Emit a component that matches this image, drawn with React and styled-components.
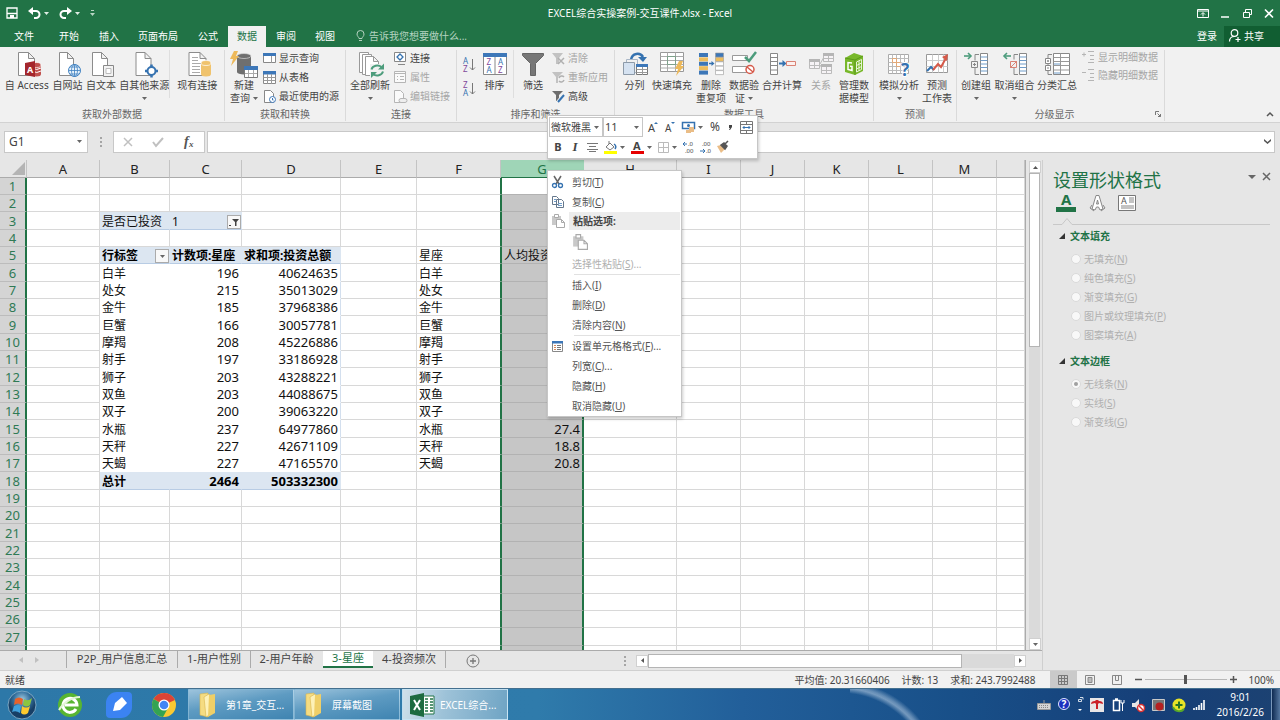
import React from "react";
import styled, { createGlobalStyle, css } from "styled-components";

const green = "#217346";
const latin = '"Noto Sans", "Noto Sans CJK SC", sans-serif';

const Global = createGlobalStyle`
  *, *::before, *::after { box-sizing: border-box; }
  body { margin: 0; font-family: ${latin}; font-size: 10px; line-height: 14px; color: #444; }
  button, input, select { font: inherit; color: inherit; margin: 0; padding: 0; border: 0; background: none; border-radius: 0; }
  select { appearance: none; }
  svg { display: block; flex: none; overflow: visible; }
`;

const Window = styled.div`
  display: flex;
  flex-direction: column;
  height: 100vh;
  overflow: hidden;
  position: relative;
  background: #e6e6e6;
`;

/* ---------- title bar and tabs ---------- */

const TitleBar = styled.header`
  display: grid;
  grid-template-columns: 1fr auto 1fr;
  align-items: center;
  height: 26px;
  flex: none;
  background: ${green};
  color: #fff;
`;
const QuickAccess = styled.div`
  display: flex;
  align-items: center;
  height: 18px;
  padding-left: 6px;
  gap: 10px;
`;
const TitleText = styled.h1`
  margin: 0;
  font-size: 10px;
  font-weight: 400;
`;
const WindowButtons = styled.div`
  display: flex;
  justify-content: flex-end;
  gap: 10px;
  padding-right: 5px;
  height: 18px;
  align-items: center;
`;
const BareButton = styled.button`
  display: flex;
  align-items: center;
  justify-content: center;
  gap: 3px;
`;
const TabRow = styled.nav`
  display: flex;
  height: 21px;
  flex: none;
  background: ${green};
  color: #fff;
`;
const RibbonTab = styled.button`
  width: ${(p) => p.$w}px;
  height: 21px;
  padding-bottom: 2px;
  background: ${(p) => (p.$active ? "#f1f1f1" : "transparent")};
  color: ${(p) => (p.$active ? green : "#fff")};
`;
const TellMe = styled.button`
  display: flex;
  align-items: center;
  gap: 4px;
  margin-left: 12px;
  padding-bottom: 2px;
  color: #b5d3c1;
`;
const TabSpacer = styled.div`
  flex: 1;
`;
const ShareButton = styled.button`
  display: flex;
  align-items: center;
  gap: 4px;
  width: 56px;
  padding: 0 0 2px 5px;
  margin-left: 7px;
  background: #115e32;
`;

/* ---------- ribbon ---------- */

const Ribbon = styled.div`
  display: flex;
  height: 76px;
  flex: none;
  padding: 3px 0 2px;
  background: #f1f1f1;
  border-bottom: 1px solid #d2d2d2;
  position: relative;
`;
const Group = styled.section`
  display: flex;
  flex-direction: column;
  width: ${(p) => p.$w}px;
  border-right: 1px solid #dadada;
  height: 71px;
`;
const GroupBody = styled.div`
  display: flex;
  flex: 1;
  padding-left: ${(p) => p.$pad || 0}px;
`;
const GroupLabel = styled.div`
  display: flex;
  justify-content: center;
  position: relative;
  height: 14px;
  line-height: 14px;
  padding-right: ${(p) => (p.$launcher ? 12 : 0)}px;
  color: #666;
`;
const Launcher = styled.button`
  position: absolute;
  right: 3px;
  top: 4px;
`;
const BigButton = styled.button`
  display: flex;
  flex-direction: column;
  align-items: center;
  width: ${(p) => p.$w}px;
  height: 56px;
  padding-top: 1px;
  white-space: nowrap;
  line-height: 13px;
  color: ${(p) => (p.$off ? "#a6a6a6" : "#444")};
`;
const BigLabel = styled.span`
  display: flex;
  align-items: center;
  justify-content: center;
  gap: 3px;
  height: 13px;
`;
const IconSlot = styled.span`
  display: block;
  height: 28px;
`;
const SmallList = styled.div`
  display: flex;
  flex-direction: column;
  gap: ${(p) => p.$gap || 5}px;
  padding: ${(p) => p.$top || 0}px 0 0 ${(p) => p.$pad || 0}px;
`;
const SmallButton = styled.button`
  display: flex;
  align-items: center;
  gap: 3px;
  height: 14px;
  white-space: nowrap;
  color: ${(p) => (p.$off ? "#a6a6a6" : "#444")};
`;
const Rule = styled.div`
  width: 1px;
  height: 48px;
  background: #dedede;
`;
const CollapseButton = styled.button`
  margin: auto 6px 3px auto;
`;

/* ---------- formula bar ---------- */

const FormulaBar = styled.div`
  display: flex;
  align-items: center;
  height: 37px;
  flex: none;
  padding: 0 5px 0 4px;
`;
const NameBox = styled.div`
  display: flex;
  align-items: center;
  width: 84px;
  height: 22px;
  padding-right: 5px;
  background: #fff;
  border: 1px solid #c8c8c8;
  input { flex: 1; min-width: 0; padding-left: 4px; font-size: 12px; line-height: 18px; }
`;
const Dots = styled.div`
  width: 25px;
  display: flex;
  justify-content: center;
`;
const FxBox = styled.div`
  display: flex;
  align-items: center;
  justify-content: space-around;
  width: 92px;
  height: 22px;
  background: #fff;
  border: 1px solid #c8c8c8;
`;
const FormulaInput = styled.div`
  display: flex;
  align-items: center;
  flex: 1;
  height: 22px;
  margin-left: 2px;
  padding-right: 3px;
  background: #fff;
  border: 1px solid #c8c8c8;
  input { flex: 1; padding: 0 4px; font-size: 12px; }
`;

/* ---------- work area ---------- */

const WorkArea = styled.div`
  display: flex;
  flex: 1;
  min-height: 0;
`;
const SheetArea = styled.main`
  display: flex;
  flex-direction: column;
  flex: 1;
  min-width: 0;
`;
const GridRow = styled.div`
  display: flex;
  flex: 1;
  min-height: 0;
  border-bottom: 1px solid #ababab;
`;
const GridClip = styled.div`
  flex: 1;
  min-width: 0;
  overflow: hidden;
  background: #fff;
`;
const Grid = styled.table`
  width: 100%;
  table-layout: fixed;
  border-collapse: separate;
  border-spacing: 0;
  font-size: 12px;
  line-height: 16px;
  color: #111;
  tbody tr { height: 17px; }
  tbody tr:nth-child(3n) { height: 18px; }
  thead tr { height: 18px; }
`;
const ColHead = styled.th`
  padding: 0;
  height: 18px;
  font-size: 13px;
  font-weight: 400;
  background: ${(p) => (p.$sel ? "#9fd5b7" : "#e6e6e6")};
  color: ${(p) => (p.$sel ? green : "#222")};
  border-right: 1px solid ${(p) => (p.$sel ? "#9fd5b7" : "#c3c3c3")};
  border-bottom: 1px solid ${(p) => (p.$sel ? green : "#ababab")};
`;
const Corner = styled.th`
  padding: 0 1px 1px 0;
  background: #e6e6e6;
  border-right: 1px solid #c3c3c3;
  border-bottom: 1px solid #ababab;
  svg { margin-left: auto; }
`;
const RowHead = styled.th`
  padding: 0;
  font-size: 13px;
  font-weight: 400;
  background: #d4d4d4;
  color: #2f7a54;
  border-right: 2px solid ${green};
  border-bottom: 1px solid #bcbcbc;
`;
const Cell = styled.td`
  padding: 2px 2px 0;
  line-height: 14px;
  white-space: nowrap;
  overflow: hidden;
  border-right: 1px solid #d8d8d8;
  border-bottom: 1px solid #d8d8d8;
  ${(p) => p.$num && css`text-align: right; font-size: 13px; padding-top: 0; line-height: 16px;`}
  ${(p) => p.$pivot && css`border-color: #fff;`}
  ${(p) => p.$edge && css`border-right-color: #d3dfee;`}
  ${(p) => p.$head && css`font-weight: 700; color: #000;`}
  ${(p) => p.$blue && css`background: #dce6f1; border-right-color: #dce6f1; border-bottom-color: #b8cce4;`}
  ${(p) => p.$beforeSel && css`border-right-color: ${green};`}
  ${(p) => p.$sel && css`
    background: ${p.$first ? "#fff" : "#c6c6c6"};
    border-left: 1px solid ${green};
    border-right: 2px solid ${green};
    border-bottom-color: #b2b2b2;
  `}
`;
const WithButton = styled.div`
  display: flex;
  align-items: center;
  justify-content: space-between;
  height: 14px;
`;
const FilterButton = styled.button`
  display: flex;
  align-items: center;
  justify-content: center;
  width: 14px;
  height: 14px;
  margin-right: -2px;
  background: #f8f8f8;
  border: 1px solid #ababab;
`;
const VScroll = styled.div`
  display: flex;
  flex-direction: column;
  width: 17px;
  padding: 1px 2px 0 3px;
  border-left: 1px solid #ababab;
  background: #e6e6e6;
`;
const ScrollButton = styled.button`
  display: flex;
  align-items: center;
  justify-content: center;
  width: 12px;
  height: 12px;
  flex: none;
  background: #fff;
  border: 1px solid #d0d0d0;
`;
const VTrack = styled.div`
  display: grid;
  grid-template-rows: 3fr 5fr;
  flex: 1;
  background: #dadada;
`;
const Thumb = styled.div`
  background: #fff;
  border: 1px solid #b4b4b4;
`;
const SheetBar = styled.div`
  display: flex;
  align-items: center;
  height: 19px;
  flex: none;
`;
const SheetNav = styled.div`
  display: flex;
  align-items: center;
  justify-content: center;
  gap: 12px;
  width: 67px;
  height: 17px;
  align-self: flex-start;
  padding-right: 8px;
  border-right: 1px solid #ababab;
`;
const SheetTab = styled.button`
  width: ${(p) => p.$w}px;
  height: 17px;
  align-self: flex-start;
  padding-bottom: 2px;
  font-size: 11px;
  white-space: nowrap;
  line-height: 14px;
  ${(p) => p.$active
    ? css`background: #fff; color: ${green}; border-bottom: 2px solid ${green};`
    : css`border-right: 1px solid ${p.$bare ? "transparent" : "#ababab"};`}
`;
const AddSheet = styled.button`
  margin-left: 20px;
`;
const HScroll = styled.div`
  display: flex;
  width: 402px;
  height: 14px;
  margin: 0 16px 0 auto;
  align-items: center;
  & > svg { margin-right: 10px; }
`;
const HTrack = styled.div`
  display: grid;
  grid-template-columns: 6fr 1fr;
  flex: 1;
  height: 14px;
  background: #dadada;
`;

/* ---------- format pane ---------- */

const Pane = styled.aside`
  width: 238px;
  flex: none;
  padding: 8px 9px 0 10px;
  border-left: 1px solid #cfcfcf;
`;
const PaneHead = styled.div`
  display: flex;
  align-items: flex-start;
  justify-content: space-between;
  h2 { margin: 0; font-size: 18px; line-height: 24px; font-weight: 400; color: ${green}; }
`;
const PaneTools = styled.div`
  display: flex;
  gap: 6px;
  padding-top: 4px;
`;
const PaneTabs = styled.div`
  display: flex;
  gap: 12px;
  padding-left: 3px;
  height: 22px;
`;
const PaneSection = styled.fieldset`
  margin: 0;
  padding: 0 0 9px 6px;
  border: 0;
  legend { display: flex; align-items: center; gap: 5px; padding: 0; margin-bottom: 5px; height: 16px; font-weight: 700; color: ${green}; }
`;
const RadioRow = styled.label`
  display: flex;
  align-items: center;
  gap: 3px;
  height: 19px;
  padding-left: 12px;
  color: #b0b0b0;
  u { text-underline-offset: 1px; }
  input { appearance: none; width: 10px; height: 10px; border-radius: 50%; background: #f8f8f8; border: 1px solid #dadada; display: grid; place-items: center; }
  input:checked::before { content: ""; width: 4px; height: 4px; border-radius: 50%; background: #a0a0a0; }
`;

/* ---------- status bar ---------- */

const StatusBar = styled.footer`
  display: flex;
  align-items: center;
  height: 18px;
  flex: none;
  padding: 0 6px 0 5px;
  background: #f1f1f1;
  border-top: 1px solid #d0d0d0;
`;
const Stats = styled.div`
  display: flex;
  gap: 12px;
  margin: 0 14px 0 auto;
`;
const ViewButton = styled.button`
  display: flex;
  align-items: center;
  justify-content: center;
  width: 27px;
  height: 17px;
  background: ${(p) => (p.$active ? "#cacaca" : "transparent")};
`;
const ZoomControl = styled.div`
  display: flex;
  align-items: center;
  gap: 3px;
  margin: 0 12px 0 4px;
`;
const ZoomSlider = styled.input`
  appearance: none;
  width: 82px;
  height: 12px;
  background: linear-gradient(#b8b8b8, #b8b8b8) center / 100% 1px no-repeat;
  &::-webkit-slider-thumb { appearance: none; width: 3px; height: 9px; background: #555; }
`;

/* ---------- taskbar ---------- */

const Taskbar = styled.div`
  display: flex;
  align-items: center;
  height: 32px;
  flex: none;
  border-top: 1px solid #44708f;
  color: #fff;
  background:
    radial-gradient(circle at -10px 95px, transparent 0 91px, rgba(190, 210, 230, 0.55) 96px, rgba(190, 210, 230, 0.45) 98px, transparent 103px) 850px 0 / 90px 32px no-repeat,
    linear-gradient(90deg, #2d78a8 0%, #2f7bab 42%, #225f9a 58%, #184f88 75%, #163f78 90%, #1c4272 100%);
`;
const Launch = styled.button`
  display: flex;
  justify-content: center;
  width: 48px;
`;
const TaskButton = styled.button`
  display: flex;
  align-items: center;
  gap: 6px;
  width: 106px;
  height: 31px;
  padding-left: 7px;
  margin-left: ${(p) => p.$gap || 0}px;
  white-space: nowrap;
  border: 1px solid rgba(200, 228, 244, ${(p) => (p.$active ? 0.9 : 0.45)});
  background: ${(p) => p.$active
    ? "linear-gradient(100deg, #cfe0ea 0%, #9dc2d8 40%, #6fa4c4 100%)"
    : "linear-gradient(170deg, #9cc3dc 0%, #5e9bc2 45%, #3f84b1 100%)"};
`;
const Tray = styled.div`
  display: flex;
  align-items: center;
  gap: 7px;
  margin-left: auto;
`;
const Clock = styled.time`
  margin: 0 7px 0 12px;
  text-align: center;
  line-height: 15px;
`;
const ShowDesktop = styled.button`
  width: 9px;
  height: 31px;
  background: linear-gradient(90deg, #0e2a52, #5577a0);
  border-left: 1px solid #7a98bb;
`;

/* ---------- floating mini toolbar and context menu ---------- */

const MiniToolbar = styled.div`
  position: absolute;
  left: 547px;
  top: 115px;
  width: 211px;
  padding: 1px;
  background: #fff;
  border: 1px solid #c6c6c6;
  box-shadow: 1px 2px 3px rgba(0, 0, 0, 0.2);
`;
const MiniRow = styled.div`
  display: flex;
  align-items: center;
  height: 20px;
  gap: ${(p) => p.$gap}px;
  padding-left: ${(p) => p.$pad || 0}px;
`;
const MiniSelect = styled.label`
  display: flex;
  align-items: center;
  width: ${(p) => p.$w}px;
  height: 20px;
  padding-right: 3px;
  border: 1px solid #c6c6c6;
  margin-right: ${(p) => p.$mr || 0}px;
  select { flex: 1; min-width: 0; padding-left: 1px; font-size: ${(p) => p.$fs}px; height: 18px; }
`;
const MiniButton = styled.button`
  display: flex;
  align-items: center;
  justify-content: center;
  gap: 3px;
  min-width: ${(p) => p.$min || 0}px;
  font-weight: ${(p) => (p.$bold ? 700 : 400)};
  font-style: ${(p) => (p.$italic ? "italic" : "normal")};
  font-family: ${(p) => (p.$italic ? '"Liberation Serif", serif' : "inherit")};
  font-size: ${(p) => p.$fs || 10}px;
`;
const Menu = styled.div`
  position: absolute;
  left: 547px;
  top: 170px;
  width: 135px;
  padding: 1px 1px 0;
  background: #fff;
  border: 1px solid #c6c6c6;
  box-shadow: 1px 2px 3px rgba(0, 0, 0, 0.2);
`;
const MenuItem = styled.button`
  display: flex;
  align-items: center;
  width: 100%;
  height: ${(p) => p.$h || 20}px;
  text-align: left;
  color: ${(p) => (p.$off ? "#b0b0b0" : "#555")};
  u { text-underline-offset: 1px; }
`;
const MenuIcon = styled.span`
  width: 23px;
  padding-left: 2px;
  flex: none;
`;
const MenuHeading = styled.div`
  display: flex;
  align-items: center;
  height: 18px;
  b { flex: 1; height: 18px; line-height: 18px; margin-left: -3px; padding-left: 4px; background: #ececec; }
`;
const MenuRule = styled.hr`
  height: 1px;
  border: 0;
  margin: 0 0 0 25px;
  background: #e1e1e1;
`;

/* ---------- icons ---------- */

const I = ({ s = 26, w, h, children, ...r }) => (
  <svg width={w || s} height={h || s} viewBox={`0 0 ${w || s} ${h || s}`} fill="none" aria-hidden="true" {...r}>{children}</svg>
);
const Caret = ({ c = "#666" }) => (
  <I w={5} h={3}><path d="M0 0h5L2.500 3z" fill={c} /></I>
);
const Doc = ({ x = 5, w = 16 }) => (
  <path d={`M${x} 1.500h${w - 6}l6 6v17h-${w}zM${x + w - 6} 1.500v6h6`} fill="#fff" stroke="#8c8c8c" />
);
const Bolt = ({ x = 0, y = 0 }) => (
  <path transform={`translate(${x} ${y})`} d="M4 0h4L6 5h3L1 15l2-7H0z" fill="#edb95a" />
);
const Cyl = ({ x, y, w, h, c, line = "#fff" }) => (
  <g fill={c}>
    <path d={`M${x} ${y + 2}v${h - 4}a${w / 2} 2.500 0 0 0 ${w} 0v-${h - 4}z`} />
    <ellipse cx={x + w / 2} cy={y + 2} rx={w / 2} ry="2.500" stroke={line} strokeWidth=".7" />
  </g>
);

const icons = {
  access: <><Doc x={4.5} w={16} /><Cyl x={18} y={12} w={9} h={13} c="#c0504d" /><path d="M18 17q5 3 9 0M18 20q5 3 9 0" stroke="#fff" /><path d="M11 12l10-2v16l-10-2z" fill="#a4262c" /><text x="13" y="22" fontSize="9" fontWeight="700" fill="#fff">A</text></>,
  web: <><Doc x={5.5} w={14} /><circle cx="20.500" cy="19.500" r="6" fill="#e9f3fb" stroke="#3c7fc0" /><path d="M14.500 19.500h12M20.500 13.500v12M16 16h9M16 23h9" stroke="#3c7fc0" strokeWidth=".8" /><ellipse cx="20.500" cy="19.500" rx="3" ry="6" stroke="#3c7fc0" strokeWidth=".8" /></>,
  text: <><Doc x={4.5} w={15} /><path d="M15.500 14.500h10v11h-10z" fill="#f3f3f3" stroke="#888" /><path d="M18 17.500h5v5h-5z" fill="#fff" stroke="#bbb" /></>,
  other: <><Doc x={5} w={15} /><circle cx="20.500" cy="20" r="4" fill="#fff" stroke="#3572b0" strokeWidth="2" /><path d="M20.500 13.500v3M20.500 23.500v3M14 20h3M24 20h3" stroke="#3572b0" strokeWidth="2.500" /></>,
  existing: <><Doc x={5} w={17} /><path d="M8 6.500h6M8 9.500h6M8 12.500h10M8 15.500h8M8 18.500h8M8 21.500h8" stroke="#aaa" /><Cyl x={17} y={10} w={10} h={15} c="#f0c36d" /></>,
  query: <><Cyl x={6} y={3} w={14} h={20} c="#6f6f6f" line="#d9d9d9" /><Bolt x={-1} y={0} /><path d="M13.500 15.500h13v11h-13z" fill="#fff" stroke="#7a7a7a" /><path d="M13 15h14v4H13z" fill="#3d77b8" /><path d="M14 22.500h12M17.500 19v7M22.500 19v7" stroke="#aaa" /></>,
  refresh: <><path d="M2.500 1.500h9v20h-9z" fill="#fff" stroke="#999" /><path d="M5.500 3.500h9v20h-9z" fill="#fff" stroke="#999" /><path d="M8.500 5.500h8l5 5v14h-13zM16.500 5.500v5h5" fill="#fff" stroke="#999" /><path d="M13 13h14v13H13z" fill="#f1f1f1" /><path d="M14.500 18.500a6 5 0 0 1 10-2.500M26 20.500a6 5 0 0 1-10 2.500" stroke="#4c9c7c" strokeWidth="2" /><path d="M27 12.500v6h-6zM14 27v-6h6z" fill="#4c9c7c" /></>,
  sort: <><path d="M1.500 2.500h23v21h-23z" fill="#fff" stroke="#888" /><path d="M1 2h24v4H1z" fill="#3d77b8" /><path d="M13 6v18" stroke="#888" /><g fontSize="8"><text x="4.500" y="14" fill="#80489b">Z</text><text x="4.500" y="22" fill="#3572b0">A</text><text x="16" y="14" fill="#3572b0">A</text><text x="16" y="22" fill="#80489b">Z</text></g></>,
  filter: <path d="M2.500 2.500h21v2l-8 8v12h-5v-12l-8-8z" fill="#777" stroke="#666" />,
  columns: <><path d="M9 9c1-7 9-8 12-3" stroke="#3572b0" strokeWidth="2.500" /><path d="M16 6h9l-4 5z" fill="#3572b0" /><path d="M4.500 8.500h11v13h-11z" fill="#f1f1f1" stroke="#a8b6c6" /><path d="M1.500 11.500h11v12h-11z" fill="#d5e2f1" stroke="#8d9aa8" /><path d="M14.500 13.500h11v10h-11z" fill="#fff" stroke="#777" /><path d="M14 13h12v3H14z" fill="#3d77b8" /><path d="M14.500 18.500h11M14.500 21.500h11M20.500 16v8" stroke="#999" /></>,
  flash: <><path d="M1.500 1.500h23v19h-23z" fill="#fff" stroke="#999" /><path d="M1.500 5.500h23M1.500 9.500h23M1.500 13.500h23M1.500 17h23M8.500 1.500v19M16.500 1.500v19" stroke="#aaa" /><path d="M8.500 5.500h8v8h-8z" stroke="#7ca18a" /><Bolt x={16} y={10} /></>,
  dedupe: <>{[0, 1, 2, 3, 4].map((i) => <g key={i}><path d={`M1 ${2 + i * 4.400}h9v4H1z`} fill={i % 2 ? "#edbd5d" : "#3d77b8"} /><path d={`M17.500 ${2 + i * 4.400}h8v4h-8z`} fill={i === 0 ? "#3d77b8" : i === 1 ? "#edbd5d" : "#fff"} stroke="#999" strokeWidth=".6" /></g>)}<path d="M11 12.500h4" stroke="#3572b0" strokeWidth="1.500" /><path d="M13.500 10l3 2.500-3 2.500z" fill="#3572b0" /></>,
  validate: <><path d="M1.500 4.500h15v5h-15zM1.500 15.500h15v6h-15z" fill="#fff" stroke="#999" /><path d="M14 6l4 4 7-9" stroke="#4c9c7c" strokeWidth="2.500" /><circle cx="19" cy="18.500" r="4" stroke="#d65a4a" strokeWidth="1.500" fill="#fff" /><path d="M16 16l6 5" stroke="#d65a4a" strokeWidth="1.500" /></>,
  merge: <><path d="M1.500 2.500h7v21h-7zM1.500 6.500h7M1.500 10.500h7M1.500 14.500h7M1.500 19h7" fill="#fff" stroke="#888" /><path d="M10 12.500h5" stroke="#3572b0" strokeWidth="2" /><path d="M13.500 9l4 3.500-4 3.500z" fill="#3572b0" /><path d="M17.500 10.500h9v4h-9z" fill="#fdf0ee" stroke="#d98375" /></>,
  relation: <g stroke="#bbb" fill="#f6f3f6"><path d="M12 13l4-7M12 14l4 6" /><path d="M1.500 8.500h10v9h-10zM15.500 2.500h10v8h-10zM13.500 13.500h10v9h-10z" /><path d="M1 8h11v3H1zM15 2h11v3H15zM13 13h11v3H13z" fill="#b5b5b5" stroke="none" /><path d="M15.500 7.500h10M13.500 19.500h10M1.500 14.500h10M6.500 11v6M20.500 5v5M18.500 16v6" /></g>,
  model: <><path d="M4 7l9-5 9 3v15l-8 4-10-3z" fill="#78b82a" /><path d="M4 7l10 2v15M14 9l8-4" stroke="#5d9a1b" /><path d="M11 12l-4-.5v7l4 1v-4l-2-.3" stroke="#fff" strokeWidth="1.500" /><path d="M15.500 11l5-2.500v10l-5 2.500zM15.500 14.500l5-2.500M15.500 18l5-2.500M18 10v10" stroke="#e5f3d4" /></>,
  whatif: <><path d="M2.500 3.500h20v19h-20z" fill="#fff" stroke="#aaa" /><path d="M2.500 7.500h20M2.500 11.500h20M2.500 15.500h20M2.500 19.500h20M6.500 3.500v19M10.500 3.500v19M14.500 3.500v19M18.500 3.500v19" stroke="#bbb" /><path d="M6.500 7.500h4v4h-4zM10.500 11.500h4v4h-4z" stroke="#e3a876" /><text x="15" y="25" fontSize="17" fontWeight="700" fill="#3572b0" stroke="#fff" strokeWidth="2" paintOrder="stroke">?</text></>,
  forecast: <><path d="M2.500 3.500h21v18h-21z" fill="#fff" stroke="#999" /><path d="M2.500 9.500h21M2.500 15.500h21M8.500 3.500v18M14.500 3.500v18M19.500 3.500v18" stroke="#ccc" /><path d="M3 20l4-4 3 3" stroke="#3572b0" strokeWidth="2" /><path d="M9 19l5-6 3 3 5-9" stroke="#d65a4a" strokeWidth="2" /><path d="M18 6l6-3-1 7z" fill="#d65a4a" /></>,
  group: <><path d="M1 5h7" stroke="#4c9c7c" strokeWidth="1.600" /><path d="M5 2l3 3-3 3" stroke="#4c9c7c" strokeWidth="1.600" /><path d="M16 3.500h-4v6M12 16v7.500h4" stroke="#888" /><path d="M8.500 10.500h6v6h-6zM10 13.500h3M11.500 12v3" stroke="#888" /><path d="M17.500 2.500h7v21h-7z" fill="#fff" stroke="#888" /><path d="M17.500 6h7M17.500 9.500h7M17.500 13h7M17.500 16.500h7M17.500 20h7" stroke="#6f9cc9" /></>,
  ungroup: <><path d="M2 5h7" stroke="#4c9c7c" strokeWidth="1.600" /><path d="M5 2L2 5l3 3" stroke="#4c9c7c" strokeWidth="1.600" /><path d="M16 3.500h-4v5M12 17v6.500h4" stroke="#888" /><path d="M8.500 10.500h6v6h-6zM8 17l7-7" stroke="#d98375" /><path d="M17.500 2.500h7v21h-7z" fill="#fff" stroke="#888" /><path d="M17.500 6h7M17.500 9.500h7M17.500 13h7M17.500 16.500h7M17.500 20h7" stroke="#6f9cc9" /></>,
  subtotal: <><path d="M8 3.500H4v4M4 14v-1M4 20v3.500h4" stroke="#888" /><path d="M1.500 7.500h5v5h-5zM1.500 14.500h5v5h-5zM4 9v2M3 10h2M3 17h2" fill="#fff" stroke="#888" /><path d="M9.500 2.500h16v21h-16z" fill="#fff" stroke="#888" /><path d="M9.500 6.500h16M9.500 10.500h16M9.500 14.500h16M9.500 19h16M16.500 2.500v21" stroke="#999" /><path d="M10 13h6M10 22h6" stroke="#6f9cc9" /></>,
};

const small = {
  showq: <><path d="M.5 1.500h12v9H.5z" fill="#fff" stroke="#888" /><path d="M0 1h13v3H0z" fill="#3d77b8" /><path d="M8.500 4v7" stroke="#999" /></>,
  table: <><path d="M.5.5h12v12H.5z" fill="#fff" stroke="#888" /><path d="M0 0h13v3.500H0z" fill="#3d77b8" /><path d="M.5 6.500h12M.5 9.500h12M4.500 3v10M8.500 3v10" stroke="#999" /></>,
  recent: <><path d="M1.500.5h6l3 3v9h-9z" fill="#fff" stroke="#888" /><circle cx="9.500" cy="9.500" r="3" fill="#fff" stroke="#3d77b8" /><path d="M9.500 8v2h1" stroke="#3d77b8" /></>,
  link: <><path d="M.5.5h11v9H.5zM4 12.500h7" fill="#fff" stroke="#888" /><path d="M6 2l3 3-3 3-3-3z" stroke="#3572b0" strokeWidth="1.300" /></>,
  props: <g stroke="#b5b5b5"><path d="M.5.5h11v11H.5z" fill="#fafafa" /><path d="M.5 2.500h11M3 5.500h1M6 5.500h4M3 8.500h1M6 8.500h4" /></g>,
  editlink: <g stroke="#b5b5b5"><path d="M.5.5h6l3 3v9h-9z" fill="#fafafa" /><path d="M5 10.500a2 2 0 0 1 2-2h4a2 2 0 0 1 0 4H7a2 2 0 0 1-2-2z" fill="#eee" /></g>,
  clear: <><path d="M0 1h11L7 6v6H4V6z" fill="#c2c2c2" /><path d="M6 6l6 6M12 6l-6 6" stroke="#b0b0b0" strokeWidth="1.500" /></>,
  reapply: <><path d="M0 1h11L6 6v6H4V6z" fill="#c2c2c2" /><path d="M7 7a3 3 0 0 1 5-1M12 9a3 3 0 0 1-5 1" stroke="#b0b0b0" strokeWidth="1.500" /></>,
  advanced: <><path d="M0 1h11L7 5v6H4V5z" fill="#6d6d6d" /><path d="M6 12l6-7" stroke="#f1f1f1" strokeWidth="4" /><path d="M6 12l6-7" stroke="#3572b0" strokeWidth="2" /></>,
  showdetail: <g stroke="#b5b5b5"><path d="M0 3.500h4M2 1.500v4M6 .5h6M8 4.500h4M8 8.500h4M6 11.500h6" /></g>,
  hidedetail: <g stroke="#b5b5b5"><path d="M0 3.500h4M6 .5h6M8 4.500h4M8 8.500h4M6 11.500h6" /></g>,
};

const SortSmall = ({ top, bottom }) => (
  <I w={13} h={14}>
    <text x="0" y="6" fontSize="8" fill={top === "A" ? "#3572b0" : "#80489b"}>{top}</text>
    <text x="0" y="14" fontSize="8" fill={top === "A" ? "#80489b" : "#3572b0"}>{bottom}</text>
    <path d="M9.500 1v11M7 9.500L9.500 12 12 9.500" stroke="#777" />
  </I>
);

/* ---------- ribbon pieces ---------- */

const Big = ({ icon, w, lines, caret, off }) => (
  <BigButton $w={w} $off={off}>
    <IconSlot><I>{icons[icon]}</I></IconSlot>
    {lines.map((l, i) => (
      <BigLabel key={i}>{l}{caret && i === lines.length - 1 && <Caret />}</BigLabel>
    ))}
  </BigButton>
);
const Small = ({ icon, off, children }) => (
  <SmallButton $off={off}><I s={13}>{small[icon]}</I>{children}</SmallButton>
);

/* ---------- sheet data ---------- */

const signs = [
  ["白羊", 196, 40624635], ["处女", 215, 35013029], ["金牛", 185, 37968386], ["巨蟹", 166, 30057781],
  ["摩羯", 208, 45226886], ["射手", 197, 33186928], ["狮子", 203, 43288221], ["双鱼", 203, 44088675],
  ["双子", 200, 39063220], ["水瓶", 237, 64977860, "27.4"], ["天秤", 227, 42671109, "18.8"], ["天蝎", 227, 47165570, "20.8"],
];
const columns = [["A", 73], ["B", 70], ["C", 72], ["D", 99], ["E", 76], ["F", 84], ["G", 83], ["H", 93], ["I", 64], ["J", 64], ["K", 64], ["L", 64], ["M", 64]];

function cellOf(col, row) {
  const sign = row >= 6 && row <= 17 ? signs[row - 6] : null;
  const p = {};
  let v = null;
  if (row === 3 && col === "B") { v = "是否已投资"; p.$blue = true; }
  if (row === 3 && col === "C") {
    v = <WithButton>1<FilterButton aria-label="筛选"><I s={10}><path d="M3 2h7L7.500 5v4H6V5zM0 8h2v1H0z" fill="#444" /></I></FilterButton></WithButton>;
    p.$blue = true;
  }
  if (row === 5) {
    if (col === "B") { v = <WithButton>行标签<FilterButton aria-label="行标签"><Caret /></FilterButton></WithButton>; }
    if (col === "C") v = "计数项:星座";
    if (col === "D") v = "求和项:投资总额";
    if ("BCD".includes(col)) { p.$blue = true; p.$head = true; }
    if (col === "F") v = "星座";
    if (col === "G") v = "人均投资额";
  }
  if (row === 18 && "BCD".includes(col)) {
    p.$blue = true; p.$head = true;
    v = { B: "总计", C: 2464, D: 503332300 }[col];
    p.$num = col !== "B";
  }
  if (sign) {
    if (col === "B" || col === "F") v = sign[0];
    if (col === "C") { v = sign[1]; p.$num = true; }
    if (col === "D") { v = sign[2]; p.$num = true; p.$edge = true; }
    if (col === "G") { v = sign[3]; p.$num = true; }
    if ("BCD".includes(col)) p.$pivot = true;
  }
  if (col === "F") p.$beforeSel = true;
  if (col === "G") { p.$sel = true; p.$first = row === 1; }
  return <Cell key={col} {...p}>{v}</Cell>;
}

const Sheet = () => (
  <Grid>
    <colgroup>
      <col style={{ width: 27 }} />
      {columns.map(([c, w]) => <col key={c} style={{ width: w }} />)}
      <col />
    </colgroup>
    <thead>
      <tr>
        <Corner><I w={13} h={13}><path d="M13 0v13H0z" fill="#b4b4b4" /></I></Corner>
        {columns.map(([c]) => <ColHead key={c} $sel={c === "G"}>{c}</ColHead>)}
        <ColHead />
      </tr>
    </thead>
    <tbody>
      {Array.from({ length: 28 }, (_, i) => i + 1).map((r) => (
        <tr key={r}>
          <RowHead>{r}</RowHead>
          {columns.map(([c]) => cellOf(c, r))}
          <Cell />
        </tr>
      ))}
    </tbody>
  </Grid>
);

const Radios = ({ name, items, checked }) => items.map(([label, key], i) => (
  <RadioRow key={label}>
    <input type="radio" name={name} disabled defaultChecked={i === checked} />
    <span>{label}(<u>{key}</u>)</span>
  </RadioRow>
));

const SectionMark = () => <I s={6}><path d="M6 0v6H0z" fill="#333" /></I>;

const Item = ({ label, k, dots, icon, off }) => (
  <MenuItem $off={off}>
    <MenuIcon>{icon}</MenuIcon>
    <span>{label}(<u>{k}</u>){dots && "..."}</span>
  </MenuItem>
);

const PasteIcon = ({ s = 14 }) => (
  <svg width={s} height={s} viewBox="0 0 14 14" fill="none"><path d="M1 2h9v9H1z" fill="#c9c9c9" /><path d="M3.500.5h4v3h-4z" fill="#fff" stroke="#aaa" /><path d="M5.500 5.500h5l3 3v5h-8zM10.500 5.500v3h3" fill="#fff" stroke="#aaa" /></svg>
);
const FolderIcon = () => (
  <I w={24} h={26}><path d="M4 2l8-1v24l-8-2z" fill="#f5dc82" stroke="#d9b64e" strokeWidth=".6" /><path d="M8 5l5-3 2 2v18l-5 3z" fill="#fdf1b8" stroke="#d9b64e" strokeWidth=".6" /><path d="M13 3l6-1v19l-7 4z" fill="#efcf68" /></I>
);

export default function App() {
  return (
    <>
      <Global />
      <Window>
        <TitleBar>
          <QuickAccess>
            <BareButton aria-label="保存"><I w={12} h={12}><path d="M1 1h10v10H1zM1 6.500h10" stroke="#fff" strokeWidth="1.300" /><path d="M4 8h4v3H4z" fill="#fff" /></I></BareButton>
            <BareButton aria-label="撤消"><I w={13} h={12}><path d="M2 4h6a3.500 3.500 0 0 1 0 7H6" stroke="#fff" strokeWidth="2" /><path d="M5 0L0 4l5 4z" fill="#fff" /></I><Caret c="#dfeee5" /></BareButton>
            <BareButton aria-label="恢复"><I w={13} h={12}><path d="M11 4H5a3.500 3.500 0 0 0 0 7h2" stroke="#fff" strokeWidth="2" /><path d="M8 0l5 4-5 4z" fill="#fff" /></I><Caret c="#dfeee5" /></BareButton>
            <BareButton aria-label="自定义"><I w={5} h={6}><path d="M1 .5h3" stroke="#b9d6c5" /><path d="M0 3h5L2.500 6z" fill="#b9d6c5" /></I></BareButton>
          </QuickAccess>
          <TitleText>EXCEL综合实操案例-交互课件.xlsx - Excel</TitleText>
          <WindowButtons>
            <BareButton aria-label="功能区选项"><I w={12} h={9}><path d="M.5.5h11v8H.5zM1 2h10M6 7.500V4M4 5.500L6 3.500l2 2" stroke="#fff" /></I></BareButton>
            <BareButton aria-label="最小化"><I w={12} h={9}><path d="M2 8h8" stroke="#fff" strokeWidth="1.500" /></I></BareButton>
            <BareButton aria-label="还原"><I w={12} h={9}><path d="M2.500 3.500h6v5h-6zM4.500 3V.5h6v5H9" stroke="#fff" /></I></BareButton>
            <BareButton aria-label="关闭"><I w={12} h={9}><path d="M2 .5l8 8M10 .5l-8 8" stroke="#fff" strokeWidth="1.600" /></I></BareButton>
          </WindowButtons>
        </TitleBar>
        <TabRow>
          <RibbonTab $w={48}>文件</RibbonTab>
          <RibbonTab $w={42}>开始</RibbonTab>
          <RibbonTab $w={38}>插入</RibbonTab>
          <RibbonTab $w={60}>页面布局</RibbonTab>
          <RibbonTab $w={40}>公式</RibbonTab>
          <RibbonTab $w={38} $active>数据</RibbonTab>
          <RibbonTab $w={40}>审阅</RibbonTab>
          <RibbonTab $w={38}>视图</RibbonTab>
          <TellMe><I w={9} h={12}><path d="M3 8.500C3 7 1 6.500 1 4a3.500 3.500 0 0 1 7 0c0 2.500-2 3-2 4.500zM3 10.500h3" stroke="#b5d3c1" /></I>告诉我您想要做什么...</TellMe>
          <TabSpacer />
          <RibbonTab $w={20}>登录</RibbonTab>
          <ShareButton><I w={11} h={13}><circle cx="5.500" cy="4" r="3.300" stroke="#fff" strokeWidth="1.200" /><path d="M.5 12.500c0-3 2-5 5-5M9 8v5M6.500 10.500h5" stroke="#fff" strokeWidth="1.200" /></I>共享</ShareButton>
        </TabRow>

        <Ribbon>
          <Group $w={225}>
            <GroupBody $pad={2}>
              <Big icon="access" w={50} lines={["自 Access"]} />
              <Big icon="web" w={32} lines={["自网站"]} />
              <Big icon="text" w={36} lines={["自文本"]} />
              <Big icon="other" w={51} lines={["自其他来源", ""]} caret />
              <Rule />
              <Big icon="existing" w={54} lines={["现有连接"]} />
            </GroupBody>
            <GroupLabel>获取外部数据</GroupLabel>
          </Group>
          <Group $w={121}>
            <GroupBody $pad={1}>
              <Big icon="query" w={36} lines={["新建", "查询"]} caret />
              <SmallList $pad={1} $top={1}>
                <Small icon="showq">显示查询</Small>
                <Small icon="table">从表格</Small>
                <Small icon="recent">最近使用的源</Small>
              </SmallList>
            </GroupBody>
            <GroupLabel>获取和转换</GroupLabel>
          </Group>
          <Group $w={111}>
            <GroupBody $pad={2}>
              <Big icon="refresh" w={44} lines={["全部刷新", ""]} caret />
              <SmallList $pad={2} $top={1}>
                <Small icon="link">连接</Small>
                <Small icon="props" off>属性</Small>
                <Small icon="editlink" off>编辑链接</Small>
              </SmallList>
            </GroupBody>
            <GroupLabel>连接</GroupLabel>
          </Group>
          <Group $w={158}>
            <GroupBody $pad={5}>
              <SmallList $pad={1} $gap={10} $top={8}>
                <SmallButton aria-label="升序"><SortSmall top="A" bottom="Z" /></SmallButton>
                <SmallButton aria-label="降序"><SortSmall top="Z" bottom="A" /></SmallButton>
              </SmallList>
              <Big icon="sort" w={37} lines={["排序"]} />
              <Rule />
              <Big icon="filter" w={38} lines={["筛选"]} />
              <SmallList $top={1}>
                <Small icon="clear" off>清除</Small>
                <Small icon="reapply" off>重新应用</Small>
                <Small icon="advanced">高级</Small>
              </SmallList>
            </GroupBody>
            <GroupLabel>排序和筛选</GroupLabel>
          </Group>
          <Group $w={259}>
            <GroupBody $pad={2}>
              <Big icon="columns" w={35} lines={["分列"]} />
              <Big icon="flash" w={40} lines={["快速填充"]} />
              <Big icon="dedupe" w={38} lines={["删除", "重复项"]} />
              <Big icon="validate" w={28} lines={["数据验", "证"]} caret />
              <Big icon="merge" w={48} lines={["合并计算"]} />
              <Big icon="relation" w={30} lines={["关系"]} off />
              <Big icon="model" w={36} lines={["管理数", "据模型"]} />
            </GroupBody>
            <GroupLabel>数据工具</GroupLabel>
          </Group>
          <Group $w={83}>
            <GroupBody $pad={4}>
              <Big icon="whatif" w={42} lines={["模拟分析", ""]} caret />
              <Big icon="forecast" w={34} lines={["预测", "工作表"]} />
            </GroupBody>
            <GroupLabel>预测</GroupLabel>
          </Group>
          <Group $w={208}>
            <GroupBody $pad={2}>
              <Big icon="group" w={34} lines={["创建组", ""]} caret />
              <Big icon="ungroup" w={43} lines={["取消组合", ""]} caret />
              <Big icon="subtotal" w={42} lines={["分类汇总"]} />
              <SmallList $pad={4} $gap={4}>
                <Small icon="showdetail" off>显示明细数据</Small>
                <Small icon="hidedetail" off>隐藏明细数据</Small>
              </SmallList>
            </GroupBody>
            <GroupLabel $launcher>分级显示<Launcher aria-label="分级显示设置"><I s={6}><path d="M.5 4V.5H4M2.500 2.500l3 3M5.500 3v2.500H3" stroke="#777" /></I></Launcher></GroupLabel>
          </Group>
          <CollapseButton aria-label="折叠功能区"><I w={8} h={6}><path d="M1 5l3-3 3 3" stroke="#555" strokeWidth="1.500" /></I></CollapseButton>
        </Ribbon>

        <FormulaBar>
          <NameBox><input aria-label="名称框" defaultValue="G1" /><Caret /></NameBox>
          <Dots><I w={2} h={10}><path d="M0 0h2v2H0zM0 4h2v2H0zM0 8h2v2H0z" fill="#a5a5a5" /></I></Dots>
          <FxBox>
            <BareButton aria-label="取消"><I s={10}><path d="M1 1l8 8M9 1L1 9" stroke="#c0c0c0" strokeWidth="1.500" /></I></BareButton>
            <BareButton aria-label="输入"><I w={12} h={10}><path d="M1 5l3 4 7-8" stroke="#c0c0c0" strokeWidth="2" /></I></BareButton>
            <BareButton aria-label="插入函数"><I w={12} h={14}><text x="1" y="11" fontSize="14" fontWeight="700" fontStyle="italic" fontFamily="Liberation Serif, serif" fill="#555">f</text><text x="6" y="12" fontSize="9" fontWeight="700" fontStyle="italic" fontFamily="Liberation Serif, serif" fill="#555">x</text></I></BareButton>
          </FxBox>
          <FormulaInput><input aria-label="编辑栏" /><I w={7} h={5}><path d="M0 0l3.500 3L7 0v2L3.500 5 0 2z" fill="#555" /></I></FormulaInput>
        </FormulaBar>

        <WorkArea>
          <SheetArea>
            <GridRow>
              <GridClip><Sheet /></GridClip>
              <VScroll>
                <ScrollButton aria-label="向上"><I w={5} h={3}><path d="M0 3h5L2.500 0z" fill="#555" /></I></ScrollButton>
                <VTrack><Thumb /></VTrack>
                <ScrollButton aria-label="向下"><Caret /></ScrollButton>
              </VScroll>
            </GridRow>
            <SheetBar>
              <SheetNav>
                <BareButton aria-label="上一张"><I w={4} h={6}><path d="M4 0v6L0 3z" fill="#c0c0c0" /></I></BareButton>
                <BareButton aria-label="下一张"><I w={4} h={6}><path d="M0 0v6l4-3z" fill="#c0c0c0" /></I></BareButton>
              </SheetNav>
              <SheetTab $w={111}>P2P_用户信息汇总</SheetTab>
              <SheetTab $w={73}>1-用户性别</SheetTab>
              <SheetTab $w={72} $bare>2-用户年龄</SheetTab>
              <SheetTab $w={50} $active>3-星座</SheetTab>
              <SheetTab $w={73}>4-投资频次</SheetTab>
              <AddSheet aria-label="新工作表"><I s={14}><circle cx="7" cy="7" r="6" stroke="#777" /><path d="M7 4v6M4 7h6" stroke="#777" strokeWidth="1.300" /></I></AddSheet>
              <HScroll>
                <I w={2} h={10}><path d="M0 0h2v2H0zM0 4h2v2H0zM0 8h2v2H0z" fill="#a5a5a5" /></I>
                <ScrollButton aria-label="向左"><I w={3} h={5}><path d="M3 0v5L0 2.500z" fill="#555" /></I></ScrollButton>
                <HTrack><Thumb /></HTrack>
                <ScrollButton aria-label="向右"><I w={3} h={5}><path d="M0 0v5l3-2.500z" fill="#555" /></I></ScrollButton>
              </HScroll>
            </SheetBar>
          </SheetArea>
          <Pane>
            <PaneHead>
              <h2>设置形状格式</h2>
              <PaneTools>
                <BareButton aria-label="窗格选项"><I w={8} h={4}><path d="M0 0h8L4 4z" fill="#666" /></I></BareButton>
                <BareButton aria-label="关闭窗格"><I s={9}><path d="M1 1l7 7M8 1L1 8" stroke="#666" strokeWidth="1.500" /></I></BareButton>
              </PaneTools>
            </PaneHead>
            <PaneTabs>
              <BareButton aria-label="文本填充与轮廓"><I w={20} h={20}><text x="5" y="12" fontSize="15" fontWeight="700" fill={green}>A</text><path d="M0 14h20v5H0z" fill={green} /></I></BareButton>
              <BareButton aria-label="文字效果"><I w={18} h={20}><path d="M4 16L8 2.500h3L15 16l-3 1-1.500-3h-2L7 17zM8.500 11h2l-1-4z" fill="#fff" stroke="#888" /><path d="M4 12l-2 3 4 3M15 12l2 3-4 3" stroke="#888" /></I></BareButton>
              <BareButton aria-label="文本框"><I w={18} h={18}><path d="M.5 1.500h17v15H.5z" fill="#fff" stroke="#777" /><path d="M11 4h5M11 6h5M11 8h5M3 12h13M3 14h13" stroke="#c3c3c3" strokeWidth="2" /><text x="3" y="10" fontSize="9" fill="#555">A</text></I></BareButton>
            </PaneTabs>
            <svg width="100%" height="14" preserveAspectRatio="none"><path d="M0 10.500h9l5-6 5 6h198" fill="none" stroke="#c8c8c8" /></svg>
            <PaneSection>
              <legend><SectionMark />文本填充</legend>
              <Radios name="fill" items={[["无填充", "N"], ["纯色填充", "S"], ["渐变填充", "G"], ["图片或纹理填充", "P"], ["图案填充", "A"]]} />
            </PaneSection>
            <PaneSection>
              <legend><SectionMark />文本边框</legend>
              <Radios name="line" checked={0} items={[["无线条", "N"], ["实线", "S"], ["渐变线", "G"]]} />
            </PaneSection>
          </Pane>
        </WorkArea>

        <StatusBar>
          <span>就绪</span>
          <Stats><span>平均值: 20.31660406</span><span>计数: 13</span><span>求和: 243.7992488</span></Stats>
          <ViewButton $active aria-label="普通"><I s={10}><path d="M.5.5h9v9h-9zM.5 3.500h9M.5 6.500h9M3.500.5v9M6.500.5v9" stroke="#777" /></I></ViewButton>
          <ViewButton aria-label="页面布局"><I s={10}><path d="M.5.5h9v9h-9zM3 2.500h4v5H3zM3 4h4M3 6h4" stroke="#888" /></I></ViewButton>
          <ViewButton aria-label="分页预览"><I s={10}><path d="M.5.5h9v9h-9zM3.500.5v5h3v-5" stroke="#888" /></I></ViewButton>
          <ZoomControl>
            <BareButton aria-label="缩小"><I w={7} h={7}><path d="M0 3.500h7" stroke="#555" strokeWidth="1.500" /></I></BareButton>
            <ZoomSlider type="range" aria-label="缩放" defaultValue="50" />
            <BareButton aria-label="放大"><I w={7} h={7}><path d="M0 3.500h7M3.500 0v7" stroke="#555" strokeWidth="1.500" /></I></BareButton>
          </ZoomControl>
          <span>100%</span>
        </StatusBar>

        <Taskbar>
          <Launch aria-label="开始"><I s={30}><defs><radialGradient id="orb" cy=".3"><stop offset="0" stopColor="#9fc8df" /><stop offset=".6" stopColor="#346f9c" /><stop offset="1" stopColor="#173f66" /></radialGradient></defs><circle cx="13" cy="15" r="14" fill="url(#orb)" stroke="#8fb7d1" strokeWidth=".8" /><path d="M6 9q4-3 8 0l-1 6q-4-3-8 0z" fill="#e8622a" /><path d="M15 9q4 3 8-1l-2 7q-3 3-7 0z" fill="#8cc63f" /><path d="M5 16q4-2 7 0l-1 7q-4-3-8-1z" fill="#3fa0dc" /><path d="M13 16q4 3 8 0l-2 7q-4 3-7 0z" fill="#fdc92e" /></I></Launch>
          <Launch aria-label="浏览器"><I s={26}><circle cx="11" cy="13" r="12" fill="#58b531" /><path d="M17 17a7 7 0 1 1 1-4H6" stroke="#fff" strokeWidth="3" /><path d="M0 18C4 11 13 5 21 5" stroke="#e3f5d5" strokeWidth="2" /></I></Launch>
          <Launch aria-label="笔记"><I s={28}><path d="M11 1h11a4 4 0 0 1 4 4v11a11 11 0 0 1-11 11H4a4 4 0 0 1-4-4V12A11 11 0 0 1 11 1z" fill="#3b83f2" /><path d="M7 20l2-8 7-6 5 6-7 7z" fill="#fff" /></I></Launch>
          <Launch aria-label="Chrome"><I s={26}><circle cx="9" cy="13" r="12" fill="#f9c932" /><path d="M9 13L-1.400 7A12 12 0 0 1 20 8z" fill="#db4437" /><path d="M9 13L-1.400 7A12 12 0 0 0 8 25l5-9z" fill="#33a352" /><circle cx="9" cy="13" r="5.500" fill="#fff" /><circle cx="9" cy="13" r="4.300" fill="#4285f4" /></I></Launch>
          <TaskButton $gap={-4}><FolderIcon />第1章_交互...</TaskButton>
          <TaskButton><FolderIcon />屏幕截图</TaskButton>
          <TaskButton $active $gap={2}><I s={24}><path d="M12 3h12v18H12z" fill="#fff" stroke="#217346" /><path d="M15 6h3M20 6h3M15 9h3M20 9h3M15 12h3M20 12h3M15 15h3M20 15h3M15 18h3M20 18h3" stroke="#217346" strokeWidth="1.500" /><path d="M0 3l14-3v24L0 21z" fill="#1d6b40" /><path d="M4 7l6 10M10 7L4 17" stroke="#fff" strokeWidth="2" /></I>EXCEL综合...</TaskButton>
          <Tray>
            <I w={14} h={12}><path d="M.5 4.500h13v6H.5zM7 4V1" fill="#d5d5d5" stroke="#999" /><path d="M2 6.500h10M2 8.500h10" stroke="#888" strokeDasharray="1 1" /></I>
            <I w={12} h={14}><circle cx="6" cy="6" r="5.500" fill="#1b2fc0" stroke="#dfe6ff" /><text x="3.500" y="10" fontSize="10" fontWeight="700" fill="#fff">?</text></I>
            <I w={6} h={18}><path d="M1.500 3.500h3v2h-3zM3 1.500h3v2" stroke="#fff" strokeWidth=".8" /><path d="M1 13h4l-2 2z" fill="#fff" /></I>
            <I w={14} h={14}><path d="M0 0h14v14H0z" fill="#e9e6e6" /><path d="M1 6q0-3 4-3l1-1h2l1 1q4 0 4 3l-4-1-1 1v5H6V6L5 5z" fill="#cb2027" /></I>
            <I w={14} h={14}><path d="M2.500 2.500h6v10h-6zM4 1h3" stroke="#fff" strokeWidth="1.500" /><path d="M10 2v3h3V2M11.500 5v8" stroke="#fff" /></I>
            <I w={13} h={14}><path d="M0 5h3l4-4v12L3 9H0z" fill="#e5e5e5" /><circle cx="9" cy="10" r="3.500" fill="#fff" stroke="#d93030" strokeWidth="1.500" /><path d="M7 8l4 4" stroke="#d93030" strokeWidth="1.500" /></I>
            <I w={13} h={14}><path d="M.5 1.500h12v11H.5z" fill="#777" stroke="#c9c9c9" /><circle cx="7.500" cy="8.500" r="4" fill="#b52020" /></I>
            <I w={14} h={14}><circle cx="7" cy="7" r="6.500" fill="#e8e327" /><path d="M1 9a6.500 6.500 0 0 0 11 2" stroke="#58a829" strokeWidth="2" /><path d="M7 3.500v7M3.500 7h7" stroke="#267326" strokeWidth="2" /></I>
            <I w={12} h={12}><path d="M1 11V9M3.500 11V8M6 11V6M8.500 11V4M11 11V1" stroke="#fff" strokeWidth="1.600" /></I>
          </Tray>
          <Clock>9:01<br />2016/2/26</Clock>
          <ShowDesktop aria-label="显示桌面" />
        </Taskbar>

        <MiniToolbar>
          <MiniRow $gap={0}>
            <MiniSelect $w={54} $fs={10}><select aria-label="字体"><option>微软雅黑</option></select><Caret /></MiniSelect>
            <MiniSelect $w={40} $fs={11} $mr={5}><select aria-label="字号"><option>11</option></select><Caret /></MiniSelect>
            <MiniRow $gap={7}>
              <MiniButton aria-label="增大字号"><I w={10} h={12}><text x="0" y="11" fontSize="11" fill="#444">A</text><path d="M6 3h4L8 1z" fill="#3572b0" /></I></MiniButton>
              <MiniButton aria-label="减小字号"><I w={10} h={12}><text x="0" y="11" fontSize="10" fill="#444">A</text><path d="M6 1h4L8 3z" fill="#3572b0" /></I></MiniButton>
              <MiniButton aria-label="会计格式"><I w={13} h={12}><path d="M.5 1.500h12v6H.5z" fill="#fff" stroke="#3572b0" strokeWidth="1.500" /><circle cx="6.500" cy="4.500" r="1.500" fill="#3572b0" /><path d="M7 6h5v5H7zM4 9h5v3H4z" fill="#eabd87" /></I><Caret /></MiniButton>
              <MiniButton $fs={12}>%</MiniButton>
              <MiniButton aria-label="千位分隔" $min={6}><I w={4} h={8}><path d="M1 2h3v2L2 7H1l1-2H1z" fill="#444" /></I></MiniButton>
              <MiniButton aria-label="合并后居中"><I w={13} h={13}><path d="M.5.5h12v12H.5zM.5 3.500h12M.5 9.500h12M6.500.5v3M6.500 9.500v3" stroke="#777" /><path d="M3 6.500h7M4.500 5L3 6.500 4.500 8M8.500 5L10 6.500 8.500 8" stroke="#3572b0" /></I></MiniButton>
            </MiniRow>
          </MiniRow>
          <MiniRow $gap={6} $pad={4}>
            <MiniButton $bold $fs={11} $min={10}>B</MiniButton>
            <MiniButton $bold $italic $fs={13} $min={12}>I</MiniButton>
            <MiniButton aria-label="居中"><I w={11} h={9}><path d="M0 .5h11M2 3.500h7M0 6.500h11M2 8.500h7" stroke="#777" /></I></MiniButton>
            <MiniButton aria-label="填充颜色"><I w={13} h={13}><path d="M2 6l4-4 4 4-4 3zM5 3V0" fill="#fff" stroke="#777" /><path d="M10 3q3 2 1 5" stroke="#3572b0" strokeWidth="1.500" /><path d="M0 10h13v3H0z" fill="#ffff00" /></I><Caret /></MiniButton>
            <MiniButton aria-label="字体颜色"><I w={13} h={13}><text x="2" y="9" fontSize="11" fontWeight="700" fill="#444">A</text><path d="M0 10h13v3H0z" fill="#e60000" /></I><Caret /></MiniButton>
            <MiniButton aria-label="边框"><I w={11} h={11}><path d="M.5.5h10v10H.5zM5.500.5v10M.5 5.500h10" stroke="#bbb" /></I><Caret /></MiniButton>
            <MiniButton aria-label="增加小数位数"><I w={11} h={12}><path d="M0 3h4M2 1L0 3l2 2" stroke="#3572b0" /><g fontSize="6" fill="#444"><text x="5" y="5">.0</text><text x="2" y="12">.00</text></g></I></MiniButton>
            <MiniButton aria-label="减少小数位数"><I w={11} h={12}><g fontSize="6" fill="#444"><text x="2" y="5">.00</text><text x="6" y="12">.0</text></g><path d="M0 10h5M3 8l2 2-2 2" stroke="#3572b0" /></I></MiniButton>
            <MiniButton aria-label="格式刷"><I s={12}><path d="M0 5l4-1 4 4-4 4z" fill="#eabd87" /><path d="M4 4l3-2 3 3-2 3zM8 3l3-3" fill="#555" stroke="#555" strokeWidth="1.500" /></I></MiniButton>
          </MiniRow>
        </MiniToolbar>

        <Menu role="menu">
          <Item label="剪切" k="T" icon={<I s={14}><path d="M3 1l5 8M10 1L5 9" stroke="#666" strokeWidth="1.500" /><circle cx="3.500" cy="10.500" r="2" stroke="#3572b0" strokeWidth="1.300" /><circle cx="9.500" cy="10.500" r="2" stroke="#3572b0" strokeWidth="1.300" /></I>} />
          <Item label="复制" k="C" icon={<I s={14}><path d="M1.500 1.500h4l2 2v6h-6zM5.500 4.500h5l2 2v6h-7z" fill="#fff" stroke="#66788c" /><path d="M3 4.500h2M3 6.500h2M7 8.500h4M7 10.500h4" stroke="#6f9cc9" /></I>} />
          <MenuHeading><MenuIcon><PasteIcon /></MenuIcon><b>粘贴选项:</b></MenuHeading>
          <MenuItem $off $h={24} aria-label="粘贴"><MenuIcon /><PasteIcon s={16} /></MenuItem>
          <Item label="选择性粘贴" k="S" dots off />
          <MenuRule />
          <Item label="插入" k="I" />
          <Item label="删除" k="D" />
          <Item label="清除内容" k="N" />
          <MenuRule />
          <Item label="设置单元格格式" k="F" dots icon={<I s={13}><path d="M1.500 1.500h10v10h-10z" fill="#fff" stroke="#888" /><path d="M1 1h11v2.500H1z" fill="#3d77b8" /><path d="M3 5.500h2M3 7.500h2M3 9.500h2" stroke="#d98a5a" /><path d="M6 5.500h4M6 7.500h4M6 9.500h4" stroke="#777" /></I>} />
          <Item label="列宽" k="C" dots />
          <Item label="隐藏" k="H" />
          <Item label="取消隐藏" k="U" />
        </Menu>
      </Window>
    </>
  );
}
